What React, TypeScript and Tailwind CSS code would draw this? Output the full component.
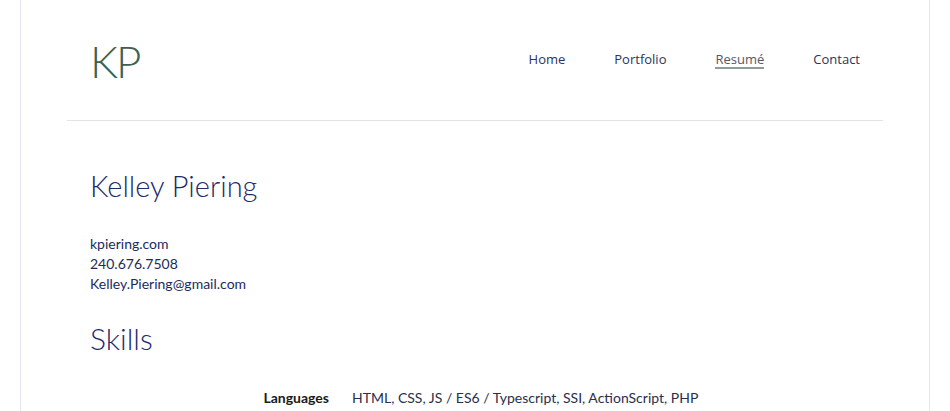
export default function App() {
  return (
    <div className="min-h-screen bg-white" style={{ fontFamily: 'Lato, "Open Sans", sans-serif' }}>
      <div className="mx-[20px] min-h-[411px] border-x border-[#e4e8ee] bg-white px-[46px]">
        {/* Header */}
        <header className="flex h-[121px] items-center justify-between border-b border-[#e2e4e6] px-[23px]">
          <a href="#" className="mt-[1px] text-[44px] leading-none font-light tracking-[-2px] text-[#3f5f50]">
            KP
          </a>
          <nav className="flex items-center gap-[49px] text-[13px] text-[#2b3458]" style={{ fontFamily: '"Open Sans", sans-serif' }}>
            <a href="#">Home</a>
            <a href="#">Portfolio</a>
            <a href="#" className="border-b-2 border-[#8f9c98] leading-[16px] text-[#5b5660]">
              Resumé
            </a>
            <a href="#">Contact</a>
          </nav>
        </header>

        {/* Resume */}
        <main className="px-[23px] pt-[47px]">
          <h1 className="text-[29px] leading-[36px] font-light text-[#1d2a6a]">Kelley Piering</h1>
          <div className="mt-[30px] text-[14px] leading-[20px] text-[#1c2a5e]">
            <p>kpiering.com</p>
            <p>240.676.7508</p>
            <p>Kelley.Piering@gmail.com</p>
          </div>

          <h2 className="mt-[26px] text-[30px] leading-[36px] font-light text-[#1d2a6a]">Skills</h2>

          <div className="mt-[32px] grid grid-cols-[239px_1fr] gap-x-[23px] text-[14px] leading-[20px]">
            <div className="text-right font-bold text-[#1a1a1a]">Languages</div>
            <div className="text-[#2a2f4a]">HTML, CSS, JS / ES6 / Typescript, SSI, ActionScript, PHP</div>
          </div>
        </main>
      </div>
    </div>
  );
}
